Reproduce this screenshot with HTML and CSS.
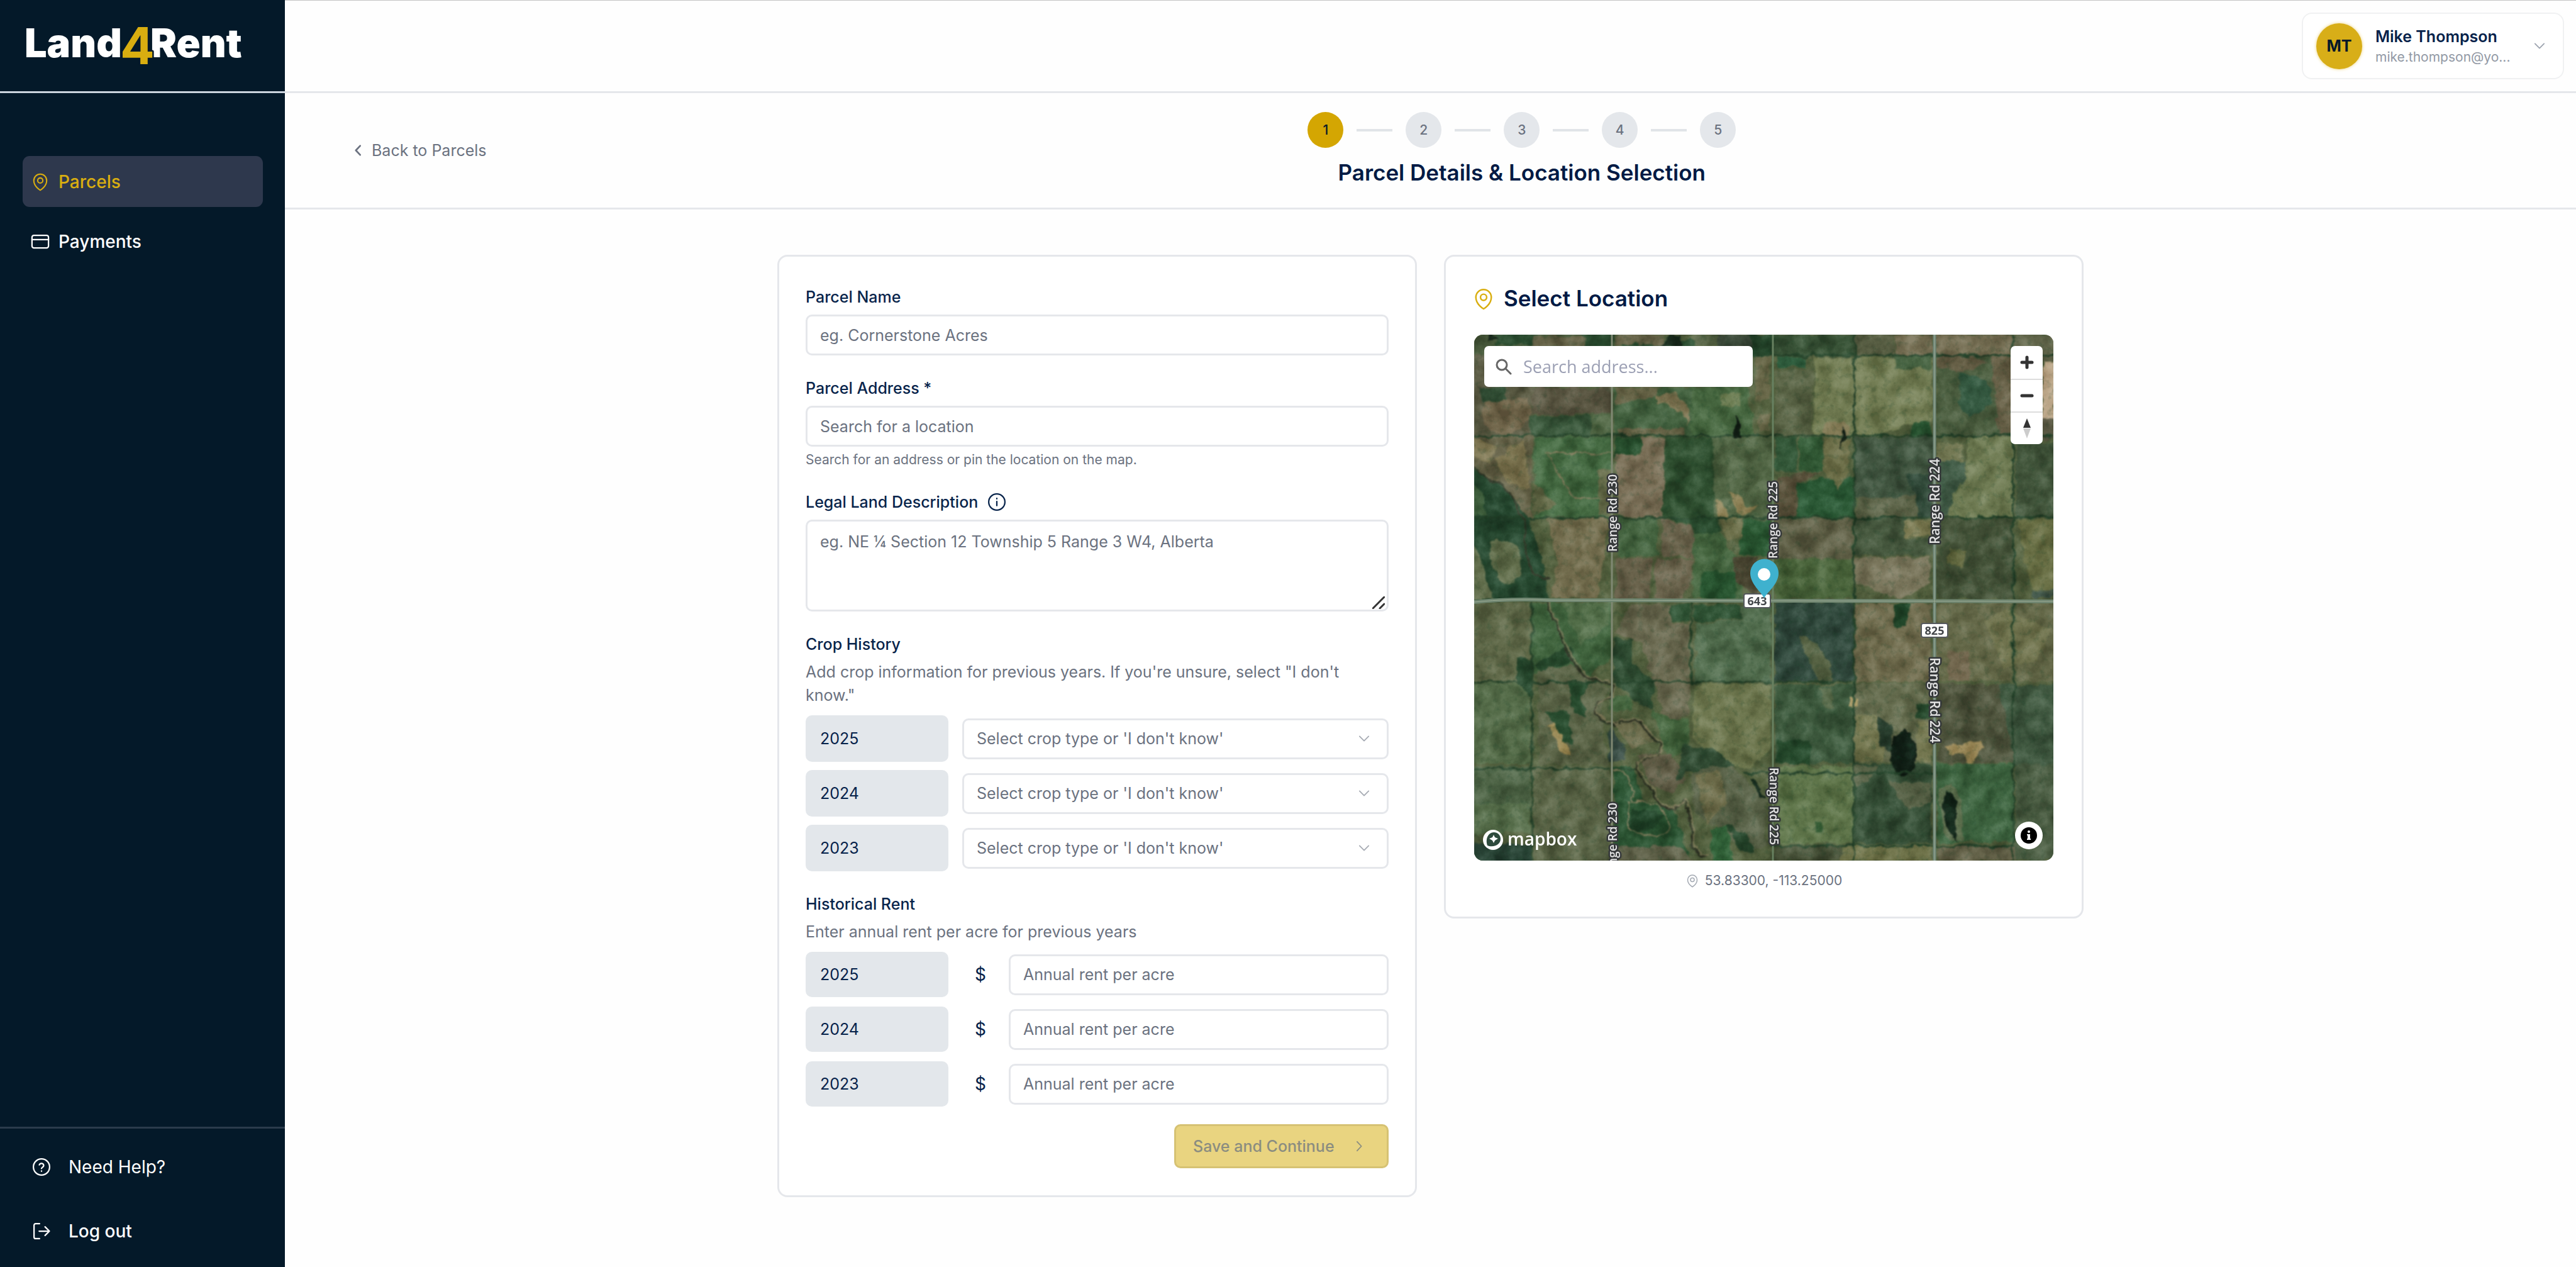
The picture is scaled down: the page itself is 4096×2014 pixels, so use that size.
FILE: index.html
```html
<!DOCTYPE html>
<html lang="en">
<head>
<meta charset="utf-8">
<meta name="viewport" content="width=device-width, initial-scale=1">
<title>Land4Rent – Parcel Details</title>
<link rel="stylesheet" href="styles.css">
</head>
<body>
<svg class="defs" aria-hidden="true">
  <symbol id="pin" viewBox="1 1 22 22"><path d="M15 10.5a3 3 0 1 1-6 0 3 3 0 0 1 6 0Z"/><path d="M19.5 10.5c0 7.142-7.5 11.25-7.5 11.25S4.5 17.642 4.5 10.5a7.5 7.5 0 1 1 15 0Z"/></symbol>
  <symbol id="chev-down" viewBox="0 0 20 12"><path d="M2 1.500 10 9.500 18 1.500"/></symbol>
  <symbol id="chev-right" viewBox="0 0 12 20"><path d="M2 2 9.500 10 2 18"/></symbol>
</svg>

<div class="app">
  <aside class="sidebar">
    <div class="brand">
      <svg class="logo" viewBox="0 0 350 70" role="img" aria-label="Land4Rent">
        <text class="logo-word" x="3" y="55">Land</text>
        <text class="logo-word" x="203" y="55">Rent</text>
        <text class="logo-four" x="155" y="66">4</text>
      </svg>
    </div>
    <nav class="nav">
      <a class="nav-item active" href="#parcels"><svg class="icon-md pin"><use href="#pin"/></svg>Parcels</a>
      <a class="nav-item" href="#payments"><svg class="icon-md" viewBox="0 0 24 24"><rect x="1.500" y="4" width="21" height="16" rx="2.500"/><path d="M1.500 9.500h21"/></svg>Payments</a>
    </nav>
    <div class="side-foot">
      <a class="foot-item" href="#help"><svg class="icon-md" viewBox="0 0 24 24"><circle cx="12" cy="12" r="10.300"/><path d="M9.200 9.300a2.900 2.900 0 0 1 5.600.900c0 1.900-2.800 2.500-2.800 3.700M12 17v.400"/></svg>Need Help?</a>
      <button class="foot-item strong" type="button"><svg class="icon-md" viewBox="0 0 24 24"><path d="M9.500 2.500H4.500a2 2 0 0 0-2 2v15a2 2 0 0 0 2 2h5M9 12h13M16.500 6.500 22 12l-5.500 5.500"/></svg>Log out</button>
    </div>
  </aside>

  <div class="page">
    <header class="topbar">
      <button class="user" type="button">
        <span class="avatar">MT</span>
        <span class="user-text"><span class="user-name">Mike Thompson</span><span class="user-mail">mike.thompson@yo...</span></span>
        <svg class="chev"><use href="#chev-down"/></svg>
      </button>
    </header>

    <section class="wizard">
      <a class="back" href="#parcels"><svg class="back-icon" viewBox="0 0 12 20"><path d="M10 2 2.500 10 10 18"/></svg>Back to Parcels</a>
      <div class="progress">
        <ol class="steps">
          <li class="step current">1</li><li class="bar"></li>
          <li class="step">2</li><li class="bar"></li>
          <li class="step">3</li><li class="bar"></li>
          <li class="step">4</li><li class="bar"></li>
          <li class="step">5</li>
        </ol>
        <h1 class="title">Parcel Details &amp; Location Selection</h1>
      </div>
    </section>

    <main class="content">
      <form class="card form">
        <div class="field">
          <label class="label" for="name">Parcel Name</label>
          <input class="control" id="name" type="text" placeholder="eg. Cornerstone Acres">
        </div>
        <div class="field">
          <label class="label" for="address">Parcel Address *</label>
          <input class="control" id="address" type="text" placeholder="Search for a location">
          <p class="hint">Search for an address or pin the location on the map.</p>
        </div>
        <div class="field">
          <label class="label" for="legal">Legal Land Description
            <svg class="icon-md" viewBox="0 0 24 24"><circle cx="12" cy="12" r="10.300"/><path d="M12 11.200v5.300M12 7.300v.600"/></svg>
          </label>
          <div class="area-wrap">
            <textarea class="control area" id="legal" placeholder="eg. NE ¼ Section 12 Township 5 Range 3 W4, Alberta"></textarea>
            <svg class="grip" viewBox="0 0 20 20"><path d="M1 19 19 1M12 19l7-7"/></svg>
          </div>
        </div>
        <fieldset class="group">
          <legend class="label">Crop History</legend>
          <p class="desc">Add crop information for previous years. If you're unsure, select "I don't know."</p>
          <div class="rows crops">
            <label class="year" for="crop25">2025</label>
            <div class="select-wrap"><select class="control" id="crop25"><option>Select crop type or 'I don't know'</option></select><svg class="chev"><use href="#chev-down"/></svg></div>
            <label class="year" for="crop24">2024</label>
            <div class="select-wrap"><select class="control" id="crop24"><option>Select crop type or 'I don't know'</option></select><svg class="chev"><use href="#chev-down"/></svg></div>
            <label class="year" for="crop23">2023</label>
            <div class="select-wrap"><select class="control" id="crop23"><option>Select crop type or 'I don't know'</option></select><svg class="chev"><use href="#chev-down"/></svg></div>
          </div>
        </fieldset>
        <fieldset class="group">
          <legend class="label">Historical Rent</legend>
          <p class="desc">Enter annual rent per acre for previous years</p>
          <div class="rows rents">
            <label class="year" for="rent25">2025</label><span class="dollar">$</span><input class="control" id="rent25" type="text" placeholder="Annual rent per acre">
            <label class="year" for="rent24">2024</label><span class="dollar">$</span><input class="control" id="rent24" type="text" placeholder="Annual rent per acre">
            <label class="year" for="rent23">2023</label><span class="dollar">$</span><input class="control" id="rent23" type="text" placeholder="Annual rent per acre">
          </div>
        </fieldset>
        <button class="save" type="submit" disabled>Save and Continue<svg class="save-icon"><use href="#chev-right"/></svg></button>
      </form>

      <section class="card place">
        <h2 class="place-title"><svg class="icon-lg"><use href="#pin"/></svg>Select Location</h2>
        <div class="map">
          <svg class="map-art" viewBox="0 0 921 836" preserveAspectRatio="xMidYMid slice" aria-hidden="true">
            <defs>
              <filter id="organic" x="-2%" y="-2%" width="104%" height="104%" color-interpolation-filters="sRGB"><feTurbulence type="fractalNoise" baseFrequency=".06" numOctaves="4" seed="4"/><feDisplacementMap in="SourceGraphic" scale="12" xChannelSelector="R" yChannelSelector="G"/><feGaussianBlur stdDeviation="1"/></filter>
              <filter id="soil" x="0" y="0" width="100%" height="100%" color-interpolation-filters="sRGB"><feTurbulence type="fractalNoise" baseFrequency=".035" numOctaves="6" seed="9"/><feColorMatrix values="1.600 0 0 0 -.300  1.600 0 0 0 -.300  1.600 0 0 0 -.300  0 0 0 0 1"/></filter>
              <filter id="leaf" x="0" y="0" width="100%" height="100%" color-interpolation-filters="sRGB"><feTurbulence type="fractalNoise" baseFrequency=".1" numOctaves="3" seed="21"/><feColorMatrix values="0 0 0 0 .080  0 0 0 0 .240  0 0 0 0 .140  3 0 0 0 -1.600"/></filter>
            </defs>
            <rect width="921" height="836" fill="#56613f"/>
            <g filter="url(#organic)">
              <!-- land north of the highway -->
              <g transform="matrix(.59 0 0 .2712 -2.6 -2.8)">
                <path fill="#4a5a3c" d="M-20-20h400v150H-20z"/><path fill="#24472c" d="M60 0h120v70H60zM290 0h90v90h-90zM400 40h200v90H400z"/>
                <path fill="#6b6248" d="M160 20h140v60H160zM385 10h130v60H385z"/><path fill="#0b1a12" d="M45 0l25 40-30 10zM535 10h25l5 70-60 10z"/>
                <path fill="#556043" d="M600 10h55v60h-55z"/><path fill="#3a463a" d="M660 10h90v80h-90z"/><path fill="#1f4229" d="M750 10h60v130h-60z"/>
                <path fill="#355035" d="M810 10h215v118H810z"/><path fill="#5c5f45" d="M1028 10h110v118h-110z"/><path fill="#7c6e55" d="M1140 10h100v118h-100zM1248 10h210v118h-210z"/><path fill="#63634a" d="M1458 10h120v160h-120z"/>
                <path fill="#5c5743" d="M-20 130h180v480H-20z"/><path fill="#2d4a32" d="M20 320h70v90H20z"/><path fill="#7b684f" d="M30 410l120-30 8 120-60 110-70-60z"/>
                <path fill="#5d5443" d="M160 320h215v160H160z"/><path fill="#36553a" d="M155 485h165v120H155z"/><path fill="#4f6443" d="M320 470h55v135h-55z"/>
                <path fill="#426240" d="M380 320h210v285H380z"/><path fill="#8a7b58" d="M490 360l60-10 35 90-5 110-10-80-70-60z"/><path fill="#6d6549" d="M385 320h120l-20 60-100 40zM390 560h180v40H390z"/>
                <path fill="#45673f" d="M590 315h150l20 290H590z"/><path fill="#6b7a4e" d="M665 370q30-30 55 0v60h-50z"/>
                <path fill="#6f6a4b" d="M762 140h40v255h-40zM770 470h32v100h-32z"/><path fill="#5c6346" d="M818 215h98v385h-98z"/><path fill="#2c6141" d="M820 140h80v60h-80z"/>
                <path fill="#7c8358" d="M922 145h318v370l-50 10-90 80H920z"/><path fill="#456241" d="M1140 135h98v70h-98z"/><path fill="#23522f" d="M1185 520h50v120h-60z"/><path fill="#8e7f5a" d="M950 540q40-40 65 0v60h-75z"/>
                <path fill="#4c5d40" d="M1250 130h205v475h-205z"/><path fill="#6d6049" d="M1250 140l90-10 50 50-70 50-70-20zM1400 140h58v470h-40z"/><path fill="#2f5640" d="M1310 230l80 40 10 140-60 90-30-100z"/><path fill="#d3b598" d="M1535 172h35v330h-35z"/><path fill="#5c5543" d="M1535 500h35v120h-35z"/>
                <path fill="#675f46" d="M-20 610h180v470L90 1085 70 880-20 800z"/><path fill="#877853" d="M5 610l60 60-20 100-50-50zM60 740l80-120 15 300-60-40z"/>
                <path fill="#446c43" d="M165 612h210v470H165z"/><path fill="#6c6e4c" d="M340 800h35v270h-35zM165 880l60 130-60 50z"/><path fill="#1f4a29" d="M380 612h75v90l-75 40z"/>
                <path fill="#82705a" d="M455 615l70 5-14 460-120-10-6-350 70-10z"/><path fill="#294b2c" d="M520 612h130v470H512z"/><path fill="#536746" d="M650 612h158v470H650z"/><path fill="#9a8759" d="M690 940l30 10 10 60 40 10-40 60-20-40zM655 960l20 20 15 100h-30z"/>
                <path fill="#2f5638" d="M815 612h60v200h-60z"/><path fill="#2c5733" d="M880 612h65v200h-65z"/><path fill="#5b4c39" d="M820 860l50-40h70l-65 60v200h-55z"/><path fill="#225330" d="M940 850h88v230H875V880z"/><path fill="#75724b" d="M950 620h70l-10 220-25 80-40-120z"/>
                <path fill="#3f5240" d="M1030 612h212v360h-212z"/><path fill="#5d6147" d="M1040 960h160v120h-168z"/><path fill="#2a4336" d="M1170 830h70v250h-40l-5-130z"/><path fill="#7c7d57" d="M1250 650h70v200h-70z"/><path fill="#45604e" d="M1255 750h75v320h-75z"/>
                <path fill="#788258" d="M1335 612h122v465h-175l20-150 28-70z"/><path fill="#40523a" d="M1465 640h110v440h-110z"/>
                <path fill="#1d402a" d="M0 790l80 110 50 120 30 100 30 250 15 200H-20V790z"/><path fill="#66704e" d="M50 1220q60-20 78 60l2 140q-20 70-60 40L45 1300zM0 1240l20 60 35 260H0z"/><path fill="#3d5f3c" d="M0 880l30 60 5 130H0z"/>
                <path fill="#7c7051" d="M200 1075l165 10-10 230-20 240H210l20-200z"/><path fill="#42633f" d="M395 1080h105v230H390z"/><path fill="#70624e" d="M510 1085l85 50v180l-85-10zM385 1320h100l-10 240h-90zM495 1325h95v140l-30 100h-70z"/>
                <path fill="#24492c" d="M520 1080h140l10 90-70 20-10-60z"/><path fill="#44663f" d="M595 1180l70-10 60 180v210H595z"/><path fill="#75734d" d="M665 1090h60v100l-40 30z"/><path fill="#23552f" d="M730 1090l75 5v225l-90-20zM620 1400h90v160h-100z"/><path fill="#4a402f" d="M705 1320h60v240l-55-100z"/>
                <path fill="#635f47" d="M820 1090h205v230H820z"/><path fill="#496339" d="M815 1320h210v240H815z"/><path fill="#475840" d="M1030 1085h140v120l70 10v90h-210z"/><path fill="#827c52" d="M1165 1100h80v95h-80z"/>
                <path fill="#847b62" d="M1030 1315h205v150l-80 95-125-100z"/><path fill="#424f36" d="M1250 1090h210v470h-210z"/><path fill="#67693f" d="M1285 1270l45 10-10 90-40-20z"/><path fill="#6f7246" d="M1468 1095h110v450l-70-40z"/><path fill="#2c4a5a" opacity=".5" d="M1510 1510h60v40h-60z"/>
              </g>
              <!-- land south of the highway -->
              <g transform="matrix(.59 0 0 .2712 -2.6 414.900)">
                <path fill="#646b4b" d="M-20 40h175v460H-20z"/><path fill="#58704c" d="M-20 515h175v470H-20zM-20 1000h175v390H-20z"/><path fill="#4d6346" d="M0 1000h155v220H0z"/><path fill="#233f35" d="M0 1450h158v130H0z"/><path fill="#1e4028" d="M120 370h38v220l-38-80z"/>
                <path fill="#3f643e" d="M160 40h215v320l-60 110H160z"/><path fill="#53704a" d="M240 40h130v130l-80 120z"/><path fill="#1f4228" d="M165 400l100-110 10 90-90 60z"/><path fill="#5f6449" d="M175 440l90-40 60 100 50 50-30 60 20 380H180z"/>
                <path fill="#20462a" d="M260 510h60l-30 90 20 110-40-20zM195 680h60l20 200-40-40z"/><path fill="#aa9058" d="M200 760l18-10 50 180h-22z"/>
                <path fill="#5f6649" d="M165 1000h205v560H165z"/><path fill="#24502f" d="M380 1000h50l30 200 80 40 50 320H380z"/><path fill="#173a22" d="M430 1250l90 30-40 100-60-10z"/><path fill="#615f49" d="M390 1470h170l40 100H390z"/>
                <path fill="#716b53" d="M425 50h110v110h50v550l-70 10-60-450-70-50z"/><path fill="#284d30" d="M535 50h50v100h-50zM595 50h130v80l-130 30z"/><path fill="#2a4830" d="M380 250h50v150l60 100-10 160-50-60-50-90z"/><path fill="#45673f" d="M370 590h60v80h-60zM480 660l60 60h45v180l-60 60z"/>
                <path fill="#726d4e" d="M380 750q40-60 80 0l30 100-60 50z"/><path fill="#304340" d="M370 770l45 130v70h-50z"/><path fill="#665c48" d="M445 930h90l40 150-40 70-50-30z"/>
                <path fill="#526e50" d="M600 165l125-30v-70h80v440H598z"/><path fill="#747b51" d="M598 520h205v385l-60 110-70-20-80-150z"/><path fill="#2b4630" d="M570 870l90 40 50 100-130 20-30 60z"/><path fill="#5b6148" d="M590 1040q50-60 120-20l80 180v270l-60 30-80-160-50-60z"/><path fill="#76704e" d="M600 1050l60-20 30 180-60 120z"/>
                <path fill="#0c1f16" d="M748 1070l12-4 28 120-10 6z"/><path fill="#2d6238" d="M645 1370l40-30 20 240h-60z"/><path fill="#1e3f27" d="M680 1340l60 60 20 110-40-20z"/>
                <path fill="#2b443c" d="M815 40h213v460H815z"/><path fill="#6d7048" opacity=".7" d="M880 240l40 20 40 130 10 110h-40z"/><path fill="#3b583e" d="M815 520h213v460H815z"/><path fill="#5e6b48" opacity=".7" d="M935 530h30l10 130-30-20z"/><path fill="#1e4428" d="M820 850h90v145l-90-20z"/>
                <path fill="#647a4e" d="M820 1000h205v455H815z"/><path fill="#304a34" d="M1030 985h208v470h-208z"/><path fill="#5a6147" d="M1120 1090h115v130l-60 30zM1030 1000h60l-20 90-40 20z"/><path fill="#265028" d="M925 1325h16v55h-16z"/>
                <path fill="#786e51" d="M1030 45h205v460h-205z"/><path fill="#1a4226" d="M1135 45h45l-12 140h-30z"/><path fill="#696d50" d="M1030 515h205v460h-205z"/><path fill="#7d7c53" d="M1033 700h60l20 270h-80zM1200 730h35v240h-40z"/><path fill="#1f4429" d="M1195 640h40v75h-40z"/><path fill="#b79d62" d="M1018 600h20v50h-20z"/>
                <ellipse cx="1162" cy="922" rx="36" ry="132" fill="#030f0b"/><path fill="#23382b" d="M1095 700l40 80-10 130-30-30z"/>
                <path fill="#6a6a4a" d="M1250 40h200v460h-200zM1465 40h110v460h-110z"/><path fill="#7c6a52" d="M1280 330h60v170h-60z"/><path fill="#807f55" opacity=".7" d="M1380 150l60-70 120 120-40 180-90 40z"/>
                <path fill="#4f503b" d="M1255 520h205v460h-205z"/><path fill="#3e5640" d="M1420 520h160v470h-120z"/><path fill="#ab905d" d="M1270 880l60-20 40-10 15 40-20 30-25 100-15-100-40 10z"/>
                <path fill="#3b6440" d="M1250 985h208v460h-208z"/><path fill="#4a5b43" d="M1463 990h115v560h-115z"/><path fill="#78775a" opacity=".6" d="M1255 1130l35-30 30 100v240l-50-30z"/><path fill="#03120c" d="M1275 1150l30 50-2 240-25-90-12-100z"/>
                <path fill="#474f37" d="M815 1468h180v90H805z"/><path fill="#74744a" d="M1000 1465h238v90h-250z"/><path fill="#6b634c" d="M1255 1465h210v90h-210z"/>
              </g>
              <!-- tree lines between quarter sections -->
              <path fill="none" stroke="#1d3d26" stroke-width="3" d="M0 161h921M470 33h451M0 291h921M350 161h260M0 552h600M345 425v130M604 0v836M857 0v836M92 425v411M800 290h121M0 690h260M430 697h300M470 813h390"/>
              <!-- river and oxbows -->
              <path fill="none" stroke="#2a2b20" stroke-width="3" d="M0 210q22 20 44 30q30 30 38 70q-6 30 12 70l24 8M116 425q20 50 32 80q20 30 26 40l46 10v22q-30 0-28 30l30 14q10-12 44-4q10 22 30 32q10 16-14 24q-30 6-24 20q22 24 34 54q30 12 40-6q14 20 14 60q0 30 22 28"/>
              <path fill="none" stroke="#8a7f5f" stroke-width="2" d="M119 425q20 50 32 78q20 30 26 40l46 10v22q-30 0-28 30l30 14q10-12 44-4q10 22 30 32q10 16-14 24q-30 6-24 20q22 24 34 54q30 12 40-6q14 20 14 60q0 30 22 28M112 188h106M116 190l42 70h52M245 742q60-4 66 40q-10 26-66 4zM220 690q30 0 32 50"/>
              <path fill="#050f0b" d="M418 125l8 40h-16zM586 145l6 18-10 20z"/>
            </g>
            <rect width="921" height="836" fill="#4f6244" opacity=".18"/>
            <rect class="soil" width="921" height="836" filter="url(#soil)"/>
            <rect class="leaf" width="921" height="836" filter="url(#leaf)"/>
            <!-- roads -->
            <g fill="none">
              <path stroke="#7f8872" stroke-width="3" d="M219 0v836"/><path stroke="#678060" stroke-width="3" d="M475 0v836"/>
              <path stroke="#6f8577" stroke-width="5" d="M732 0v836"/><path stroke="#6f8570" stroke-width="6" d="M0 425q60-6 120-3l801 2"/>
              <path stroke="#9cab95" stroke-width="1" d="M732 0v836M0 425q60-6 120-3l801 2"/>
            </g>
            <g class="road-names">
              <text transform="translate(227 345) rotate(-90)">Range Rd 230</text>
              <text transform="translate(482 356) rotate(-90)">Range Rd 225</text>
              <text class="wide" transform="translate(740 333) rotate(-90)">Range Rd 224</text>
              <text class="wide" transform="translate(725 513) rotate(90)">Range Rd 224</text>
              <text transform="translate(470 688) rotate(90)">Range Rd 225</text>
              <text transform="translate(227 867) rotate(-90)">Range Rd 230</text>
            </g>
            <g class="shield">
              <rect x="429" y="412" width="42" height="22" rx="3"/><text x="450" y="430">643</text>
              <rect x="711" y="459" width="42" height="22" rx="3"/><text x="732" y="477">825</text>
            </g>
            <path fill="#3fb1ce" d="M461 419c-3-9-22-22-22-40a22 22 0 0 1 45 0c0 18-19 31-23 40Z"/><circle cx="461" cy="381" r="10" fill="#fff"/>
            <g class="maplogo">
              <circle cx="30" cy="803" r="16" fill="#fff"/>
              <path fill="#2d4a3c" d="M39 794c-4-4-11-4-15 0-5 5-5 13-3 18 5 2 13 2 18-3 4-4 4-11 0-15Z"/><path fill="#fff" d="m31 795 2 4 5 2-5 3-2 4-2-4-5-3 5-2z"/>
              <text x="53" y="812">mapbox</text>
            </g>
          </svg>
          <label class="search">
            <svg class="search-icon" viewBox="0 0 26 26"><circle cx="10" cy="10" r="8"/><path d="m16 16 8 8"/></svg>
            <input class="search-input" type="text" aria-label="Search address" placeholder="Search address...">
          </label>
          <div class="zoom">
            <button class="zoom-btn" type="button" aria-label="Zoom in"><svg viewBox="0 0 30 30"><path class="thick" d="M15 7v16M7 15h16"/></svg></button>
            <button class="zoom-btn" type="button" aria-label="Zoom out"><svg viewBox="0 0 30 30"><path class="thick" d="M7 15h16"/></svg></button>
            <button class="zoom-btn" type="button" aria-label="Reset bearing to north"><svg viewBox="0 0 30 36"><path fill="#333" d="m15 2 6 15H9z"/><path fill="#ccc" d="m15 34 6-16H9z"/></svg></button>
          </div>
          <button class="attrib" type="button" aria-label="Toggle attribution"><svg viewBox="0 0 26 26"><circle cx="13" cy="13" r="13" fill="#000"/><circle cx="13" cy="7" r="2" fill="#fff"/><path fill="#fff" d="M10 11h5v7h1v2h-6v-2h1v-5h-1z"/></svg></button>
        </div>
        <p class="coords"><svg class="icon-sm"><use href="#pin"/></svg>53.83300, -113.25000</p>
      </section>
    </main>
  </div>
</div>
</body>
</html>
```
FILE: styles.css
```css
:root {
  --navy: #041929;
  --ink: #06224a;
  --muted: #6b7280;
  --line: #e5e7eb;
  --gold: #d9ae10;
}
*, *::before, *::after { box-sizing: border-box; }
body { margin: 0; background: #fefefe; color: var(--ink); font: 400 25px/36px Inter, sans-serif; }
h1, h2, p, ol, fieldset, legend { margin: 0; padding: 0; border: 0; }
button, input, select, textarea { font: inherit; color: inherit; margin: 0; }
button { cursor: pointer; }
a { color: inherit; text-decoration: none; }
svg { display: block; flex: none; fill: none; stroke: currentColor; stroke-width: 2; stroke-linecap: round; stroke-linejoin: round; }
.defs { position: absolute; width: 0; height: 0; }
.icon-sm { width: 22px; height: 22px; stroke-width: 1.5; }
.icon-md { width: 30px; height: 30px; stroke-width: 1.8; }
.icon-md.pin { stroke-width: 1.5; }
.icon-lg { width: 36px; height: 36px; stroke-width: 1.5; }

.app { display: grid; grid-template-columns: 453px 1fr; min-height: 100vh; }

/* sidebar */
.sidebar { display: flex; flex-direction: column; background: var(--navy); color: #fff; font-size: 28px; }
.brand { height: 148px; padding: 36px; border-bottom: 3px solid #ccd5df; }
.logo { width: 350px; height: 70px; stroke: none; overflow: visible; }
.logo-word { font: 900 63px Inter, sans-serif; fill: #fff; }
.logo-four { font: 700 81px Inter, sans-serif; fill: var(--gold); stroke: var(--navy); stroke-width: 5; paint-order: stroke; }
.nav { flex: 1; display: flex; flex-direction: column; gap: 14px; padding: 100px 35px 40px 36px; }
.nav-item { display: flex; align-items: center; gap: 14px; height: 81px; padding: 0 13px; border-radius: 11px; font-weight: 500; }
.nav-item.active { background: #2e384d; color: var(--gold); }
.side-foot { display: flex; flex-direction: column; gap: 21px; padding: 20px 36px 17px; border-top: 3px solid #2b3b4c; }
.foot-item { display: flex; align-items: center; gap: 28px; height: 81px; padding: 0 15px; border: 0; background: none; }
.foot-item.strong { font-weight: 500; }

/* top bar */
.page { display: flex; flex-direction: column; min-width: 0; }
.topbar { display: flex; justify-content: flex-end; align-items: center; height: 148px; padding-right: 19px; border-top: 1px solid #c4c4c4; border-bottom: 3px solid var(--line); }
.user { display: flex; align-items: center; gap: 21px; width: 417px; height: 106px; padding: 0 28px 0 21px; border: 2px solid #f0f1f2; border-radius: 16px; background: #fff; text-align: left; }
.avatar { display: grid; place-items: center; width: 73px; height: 73px; border-radius: 50%; background: #d8ae18; box-shadow: 0 0 5px #ecd27a; color: var(--navy); font-weight: 700; }
.user-text { flex: 1; display: flex; flex-direction: column; }
.user-name { font-weight: 600; }
.user-mail { font-size: 21px; line-height: 30px; color: #9299a5; }
.chev { width: 18px; height: 11px; color: #9ca3af; stroke-width: 2; }

/* step header */
.wizard { display: grid; grid-template-columns: auto 1fr; align-items: center; gap: 80px; padding: 30px 110px; border-bottom: 3px solid var(--line); }
.back { display: flex; align-items: center; gap: 16px; color: var(--muted); }
.back-icon { width: 12px; height: 18px; stroke-width: 3; }
.progress { display: flex; flex-direction: column; align-items: center; gap: 13px; }
.steps { display: flex; align-items: center; gap: 21px; list-style: none; }
.step { display: grid; place-items: center; width: 57px; height: 57px; border-radius: 50%; background: #e4e7eb; color: var(--muted); font-size: 21px; font-weight: 500; }
.step.current { background: #d4a602; color: var(--navy); }
.bar { width: 57px; height: 4px; background: #e1e4e8; }
.title { font-size: 35px; line-height: 52px; font-weight: 600; color: #001a44; }

/* cards */
.content { display: grid; grid-template-columns: 1fr 1fr; align-items: start; gap: 43px; width: 100%; max-width: 2077px; margin: 0 auto; padding: 72px 0; }
.card { border: 3px solid var(--line); border-radius: 16px; background: #fff; }
.form { display: flex; flex-direction: column; gap: 34px; padding: 46px 42px 43px; }
.label { display: flex; align-items: center; gap: 15px; font-weight: 500; color: #08244b; }
.field > .label { margin-bottom: 10px; }
.control { display: block; width: 100%; height: 65px; padding: 0 20px; border: 3px solid var(--line); border-radius: 10px; background: #fff; color: var(--muted); appearance: none; }
.control::placeholder { color: var(--muted); opacity: 1; }
.hint { margin-top: 6px; font-size: 21px; line-height: 30px; color: var(--muted); }
.area-wrap, .select-wrap { position: relative; }
.area { height: 146px; padding: 14px 20px; resize: none; }
.grip { position: absolute; right: 6px; bottom: 4px; width: 20px; height: 20px; color: #333; stroke-width: 3; }
.desc { margin-top: 8px; line-height: 37px; color: var(--muted); }
.rows { display: grid; align-items: center; column-gap: 22px; margin-top: 13px; }
.crops { grid-template-columns: 227px 1fr; grid-auto-rows: 74px; row-gap: 13px; }
.rents { grid-template-columns: 227px 52px 1fr; grid-auto-rows: 72px; row-gap: 15px; }
.year { display: flex; align-items: center; height: 100%; padding: 0 23px; border-radius: 10px; background: #e3e7eb; }
.dollar { padding-left: 20px; font-size: 28px; }
.select-wrap .chev { position: absolute; right: 30px; top: 27px; color: #a6abb3; pointer-events: none; }
.save { display: flex; align-items: center; justify-content: space-between; align-self: flex-end; width: 341px; height: 70px; margin-top: -6px; padding: 0 38px 0 27px; border: 3px solid #d6c273; border-radius: 10px; background: #e9d480; color: #8b8d80; font-weight: 500; }
.save-icon { width: 11px; height: 18px; stroke-width: 2; }

/* location */
.place { padding: 43px 45px 42px; }
.place-title { display: flex; align-items: center; gap: 14px; margin-left: -3px; font-size: 35px; line-height: 47px; font-weight: 600; color: #001a44; }
.place-title .icon-lg { color: var(--gold); }
.map { position: relative; height: 836px; margin-top: 34px; border-radius: 14px; overflow: hidden; }
.map-art { width: 100%; height: 100%; stroke: none; }
.soil { mix-blend-mode: soft-light; opacity: .4; }
.leaf { opacity: .22; }
.road-names { font: 600 19px "Open Sans", sans-serif; fill: #e2e2e2; stroke: #35383a; stroke-width: 5; paint-order: stroke; }
.road-names .wide { font-size: 21px; }
.shield rect { fill: #fff; stroke: #55585c; stroke-width: 2; }
.shield text { font: 700 18px "Open Sans", sans-serif; fill: #44474b; text-anchor: middle; }
.maplogo text { font: 600 28px "Open Sans", sans-serif; fill: #fff; }
.search { position: absolute; left: 16px; top: 18px; display: flex; align-items: center; gap: 18px; width: 427px; height: 65px; padding: 0 18px; border-radius: 7px; background: #fff; }
.search-icon { width: 26px; height: 26px; color: #666; stroke-width: 3; }
.search-input { flex: 1; min-width: 0; padding: 0; border: 0; background: none; font: 27px/36px "Open Sans", sans-serif; }
.search-input::placeholder { color: #9ca0b4; opacity: 1; }
.zoom { position: absolute; right: 17px; top: 18px; display: grid; grid-auto-rows: 52px; width: 51px; border-radius: 7px; background: #fff; overflow: hidden; }
.zoom-btn { display: grid; place-items: center; padding: 0; border: 0; background: none; }
.zoom-btn + .zoom-btn { border-top: 2px solid #ddd; }
.zoom-btn svg { width: 30px; height: 36px; stroke: none; }
.zoom-btn .thick { stroke: #333; stroke-width: 5; }
.attrib { position: absolute; right: 17px; bottom: 18px; display: grid; place-items: center; width: 44px; height: 44px; padding: 0; border: 0; border-radius: 50%; background: #fff; }
.attrib svg { width: 26px; height: 26px; stroke: none; }
.coords { display: flex; align-items: center; justify-content: center; gap: 9px; margin-top: 17px; font-size: 21px; line-height: 30px; color: var(--muted); }
.coords .icon-sm { color: #a3a9b2; }
```
